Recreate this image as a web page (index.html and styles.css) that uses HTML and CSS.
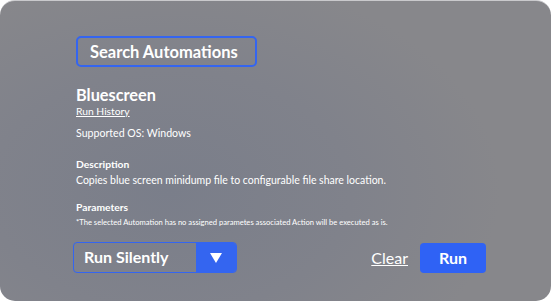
FILE: index.html
```html
<!DOCTYPE html>
<html lang="en">
<head>
    <meta charset="UTF-8">
    <meta name="viewport" content="width=device-width, initial-scale=1.0">
    <title>Run Automation</title>
    <link rel="stylesheet" href="styles.css">
</head>
<body>
    <main class="panel">
        <button class="search-btn" type="button">Search Automations</button>

        <section class="details">
            <h2>Bluescreen</h2>
            <a href="#" class="history-link">Run History</a>
            <p class="os">Supported OS: Windows</p>

            <h3>Description</h3>
            <p class="desc">Copies blue screen minidump file to configurable file share location.</p>

            <h3 class="params-title">Parameters</h3>
            <p class="note">*The selected Automation has no assigned parametes associated Action will be executed as is.</p>
        </section>

        <div class="actions">
            <div class="mode-select">
                <span class="mode-label">Run Silently</span>
                <span class="mode-arrow">
                    <svg width="12" height="10" viewBox="0 0 12 10"><path d="M0 0 H12 L6 10 Z" fill="#fff"/></svg>
                </span>
            </div>
            <div class="right-actions">
                <a href="#" class="clear-link">Clear</a>
                <button class="run-btn" type="button">Run</button>
            </div>
        </div>
    </main>
</body>
</html>
```

FILE: styles.css
```css
/* General Reset */
html, body {
    margin: 0;
    height: 100%;
    background-color: #fff;
}

body {
    font-family: Lato, "Open Sans", sans-serif;
    color: #fff;
}

.panel {
    box-sizing: border-box;
    height: 301px;
    border-radius: 15px;
    border-top: 1px solid #c9c9cc;
    background: radial-gradient(ellipse 330px 220px at 170px 190px, #7a7e8a 0%, #80828b 55%, #87878b 100%);
    padding: 35px 65px 0 73px;
}

.search-btn {
    display: block;
    width: 181px;
    height: 31px;
    margin-left: 3px;
    padding: 0 0 0 12px;
    text-align: left;
    background: transparent;
    border: 2px solid #3465f0;
    border-radius: 5px;
    color: #fff;
    font-family: inherit;
    font-size: 16.5px;
    font-weight: bold;
}

.details {
    padding-left: 3px;
    margin-top: 18px;
    font-size: 10px;
    line-height: 12px;
}

.details h2 {
    margin: 0;
    font-size: 16.3px;
    line-height: 20px;
}

.history-link {
    display: inline-block;
    color: #fff;
    font-size: 10.3px;
}

.os {
    margin: 10px 0 0;
    font-size: 10.6px;
}

.details h3 {
    margin: 19px 0 0;
    font-size: 10.3px;
}

.desc {
    margin: 4px 0 0;
    font-size: 10.5px;
    line-height: 13px;
}

.details .params-title {
    margin-top: 14px;
}

.note {
    margin: 4px 0 0;
    font-size: 7.6px;
    line-height: 10px;
}

.actions {
    display: flex;
    justify-content: space-between;
    align-items: center;
    margin-top: 15px;
}

.mode-select {
    display: flex;
    width: 164px;
    height: 31px;
    box-sizing: border-box;
    border: 1.5px solid #3465f0;
    border-radius: 4px;
    overflow: hidden;
}

.mode-label {
    flex: 1;
    padding-left: 10px;
    font-size: 16px;
    font-weight: bold;
    line-height: 28px;
}

.mode-arrow {
    display: flex;
    align-items: center;
    justify-content: center;
    width: 40px;
    background-color: #3465f0;
}

.right-actions {
    display: flex;
    align-items: center;
    gap: 12px;
}

.clear-link {
    color: #fff;
    font-size: 16px;
}

.run-btn {
    width: 66px;
    height: 30px;
    background-color: #2f62f5;
    border: none;
    border-radius: 4px;
    color: #fff;
    font-family: inherit;
    font-size: 16px;
    font-weight: bold;
}
```
